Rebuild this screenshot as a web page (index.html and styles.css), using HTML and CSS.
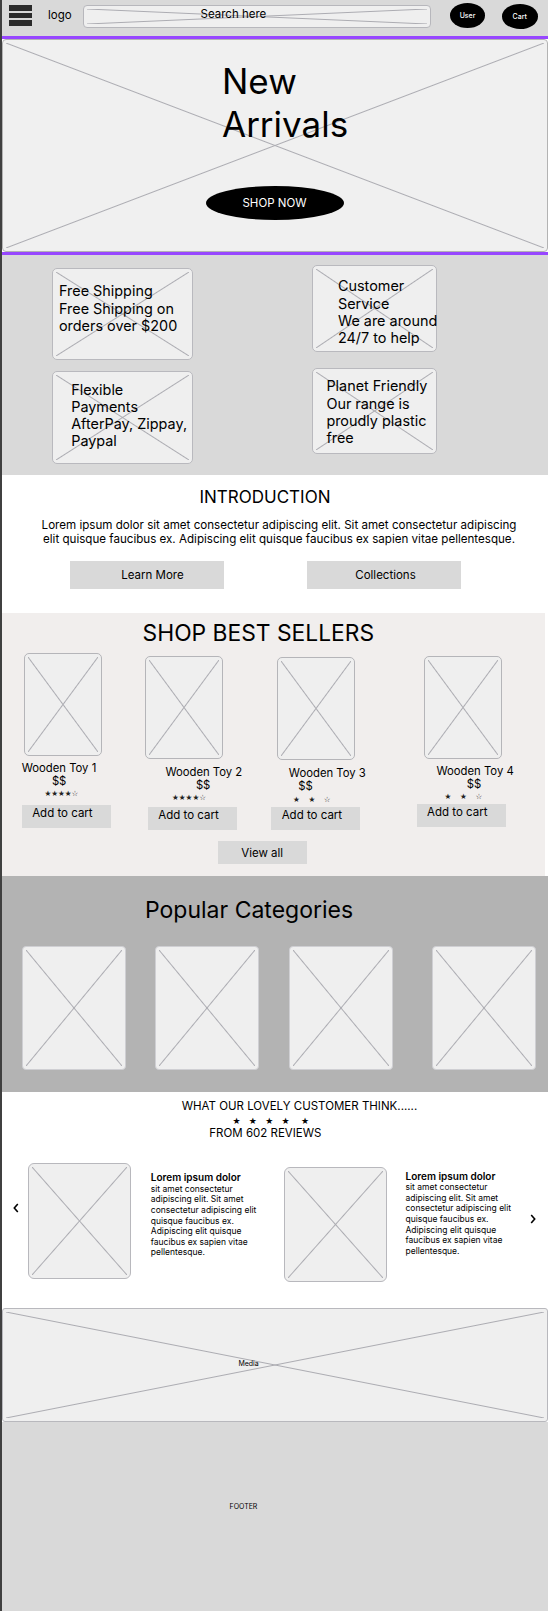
FILE: index.html
```html
<!DOCTYPE html>
<html lang="en">
<head>
<meta charset="utf-8">
<title>Wooden Toys – Home wireframe</title>
<link rel="stylesheet" href="styles.css">
</head>
<body>
<header class="topbar">
  <div class="menu"><span></span><span></span><span></span></div>
  <div class="logo">logo</div>
  <div class="search x">Search here</div>
  <a class="pill pill-user">User</a>
  <a class="pill pill-cart">Cart</a>
</header>

<section class="hero">
  <div class="hero-box x">
    <h1 class="hero-title">New<br>Arrivals</h1>
    <a class="shop-now">SHOP NOW</a>
  </div>
</section>

<section class="features">
  <div class="feat-col feat-col-left">
    <div class="feat feat-1 x">Free Shipping<br>Free Shipping on<br>orders over $200</div>
    <div class="feat feat-3 x">Flexible<br>Payments<br>AfterPay, Zippay,<br>Paypal</div>
  </div>
  <div class="feat-col feat-col-right">
    <div class="feat feat-2 x">Customer<br>Service<br>We are around<br>24/7 to help</div>
    <div class="feat feat-4 x">Planet Friendly<br>Our range is<br>proudly plastic<br>free</div>
  </div>
</section>

<section class="intro">
  <h2 class="intro-title">INTRODUCTION</h2>
  <p class="intro-text">Lorem ipsum dolor sit amet consectetur adipiscing elit. Sit amet consectetur adipiscing<br>elit quisque faucibus ex. Adipiscing elit quisque faucibus ex sapien vitae pellentesque.</p>
  <div class="intro-actions">
    <a class="btn btn-wide btn-learn">Learn More</a>
    <a class="btn btn-wide btn-coll">Collections</a>
  </div>
</section>

<section class="sellers">
  <h2 class="sellers-title">SHOP BEST SELLERS</h2>
  <div class="products">
    <div class="product p1">
      <div class="product-img x"></div>
      <div class="product-name">Wooden Toy 1</div>
      <div class="product-price">$$</div>
      <div class="product-stars stars-tight">★★★★☆</div>
      <a class="btn btn-cart">Add to cart</a>
    </div>
    <div class="product p2">
      <div class="product-img x"></div>
      <div class="product-name">Wooden Toy 2</div>
      <div class="product-price">$$</div>
      <div class="product-stars stars-tight">★★★★☆</div>
      <a class="btn btn-cart">Add to cart</a>
    </div>
    <div class="product p3">
      <div class="product-img x"></div>
      <div class="product-name">Wooden Toy 3</div>
      <div class="product-price">$$</div>
      <div class="product-stars stars-wide"><span>★</span><span>★</span><span>☆</span></div>
      <a class="btn btn-cart">Add to cart</a>
    </div>
    <div class="product p4">
      <div class="product-img x"></div>
      <div class="product-name">Wooden Toy 4</div>
      <div class="product-price">$$</div>
      <div class="product-stars stars-wide"><span>★</span><span>★</span><span>☆</span></div>
      <a class="btn btn-cart">Add to cart</a>
    </div>
  </div>
  <a class="btn btn-view">View all</a>
</section>

<section class="cats">
  <h2 class="cats-title">Popular Categories</h2>
  <div class="cat-row">
    <div class="cat cat-1 x"></div>
    <div class="cat cat-2 x"></div>
    <div class="cat cat-3 x"></div>
    <div class="cat cat-4 x"></div>
  </div>
</section>

<section class="reviews">
  <p class="rev-head">WHAT OUR LOVELY CUSTOMER THINK......</p>
  <div class="rev-stars"><span>★</span><span>★</span><span>★</span><span class="gap">★</span><span>★</span></div>
  <p class="rev-count">FROM 602 REVIEWS</p>
  <div class="carousel">
    <svg class="chev chev-left" width="6" height="10" viewBox="0 0 6 10"><path d="M4.8 1 L1.3 5 L4.8 9" fill="none" stroke="#000" stroke-width="1.6"/></svg>
    <div class="rev-img rev-img-1 x"></div>
    <p class="rev-text rev-text-1"><strong>Lorem ipsum dolor</strong><br>sit amet consectetur<br>adipiscing elit. Sit amet<br>consectetur adipiscing elit<br>quisque faucibus ex.<br>Adipiscing elit quisque<br>faucibus ex sapien vitae<br>pellentesque.</p>
    <div class="rev-img rev-img-2 x"></div>
    <p class="rev-text rev-text-2"><strong>Lorem ipsum dolor</strong><br>sit amet consectetur<br>adipiscing elit. Sit amet<br>consectetur adipiscing elit<br>quisque faucibus ex.<br>Adipiscing elit quisque<br>faucibus ex sapien vitae<br>pellentesque.</p>
    <svg class="chev chev-right" width="6" height="10" viewBox="0 0 6 10"><path d="M1.2 1 L4.7 5 L1.2 9" fill="none" stroke="#000" stroke-width="1.6"/></svg>
  </div>
</section>

<section class="media x">Media</section>

<footer class="footer">FOOTER</footer>
</body>
</html>
```

FILE: styles.css
```css
* { box-sizing: border-box; }
html, body { margin: 0; padding: 0; }
body {
  width: 548px;
  min-height: 1611px;
  border-left: 2px solid #404040;
  background: #ffffff;
  font-family: Inter, "Noto Sans", "Liberation Sans", sans-serif;
  color: #000;
}
h1, h2, p { margin: 0; font-weight: 400; }
a { color: inherit; text-decoration: none; }

/* wireframe placeholder with an X */
.x {
  background-color: #efefef;
  background-image:
    linear-gradient(to top right, transparent calc(50% - 1px), #acacb2 50%, transparent calc(50% + 1px)),
    linear-gradient(to bottom right, transparent calc(50% - 1px), #acacb2 50%, transparent calc(50% + 1px));
  background-repeat: no-repeat;
  background-position: center;
  background-size: calc(100% - 6px) calc(100% - 6px);
}

/* ---------- header ---------- */
.topbar {
  display: flex;
  align-items: flex-start;
  height: 36px;
  background: #d9d9d9;
}
.menu {
  display: flex;
  flex-direction: column;
  gap: 2px;
  width: 23px;
  margin: 5px 0 0 7px;
}
.menu span { display: block; height: 5.7px; background: #2b2b2b; }
.logo {
  margin: 8.3px 0 0 16px;
  font-size: 11.5px;
  line-height: 14px;
}
.search {
  width: 348px;
  height: 23px;
  margin: 5px 0 0 11.4px;
  padding: 1.2px 0 0 116.5px;
  border: 1px solid #b7b7bc;
  border-radius: 4px;
  font-size: 11.5px;
  line-height: 14px;
  white-space: nowrap;
}
.pill {
  display: flex;
  align-items: center;
  justify-content: center;
  background: #000;
  color: #fff;
  border-radius: 50%;
  font-size: 7px;
  font-weight: 500;
}
.pill-user { width: 35px; height: 24.4px; margin: 3.3px 0 0 19px; }
.pill-cart { width: 36px; height: 24.7px; margin: 4.3px 0 0 16.7px; }

/* ---------- hero ---------- */
.hero {
  margin-left: -2px;
  border: 3px solid #9747ff;
  border-left-width: 2px;
  border-right: 0;
}
.hero-box {
  height: 213px;
  padding-top: 20.2px;
  border: 1px solid #b3b3b3;
  border-radius: 4px;
  background-color: #f0f0f0;
}
.hero-title {
  margin-left: 219px;
  font-size: 35px;
  line-height: 43px;
}
.shop-now {
  display: flex;
  align-items: center;
  justify-content: center;
  width: 138px;
  height: 34px;
  margin: 39.8px 0 0 202.5px;
  background: #000;
  color: #fff;
  border-radius: 50%;
  font-size: 11.5px;
}

/* ---------- features ---------- */
.features {
  display: flex;
  height: 220px;
  padding-left: 50.4px;
  background: #d9d9d9;
}
.feat-col { display: flex; flex-direction: column; }
.feat-col-left { width: 141px; padding-top: 12.7px; gap: 10.4px; }
.feat-col-right { width: 125px; margin-left: 118.7px; padding-top: 9.7px; gap: 15.7px; }
.feat {
  border: 1.5px solid #b9b9be;
  border-radius: 5px;
  font-size: 14.4px;
  line-height: 17.2px;
  white-space: nowrap;
}
.feat-1 { height: 92.6px; padding: 13.8px 0 0 5.6px; }
.feat-2 { height: 87.3px; padding: 11.8px 0 0 24.9px; }
.feat-3 { height: 93px; padding: 9.1px 0 0 17.8px; }
.feat-4 { height: 86.6px; padding: 8.8px 0 0 13.3px; }

/* ---------- intro ---------- */
.intro {
  height: 138.3px;
  padding-top: 11.9px;
  background: #fff;
}
.intro-title {
  padding-right: 20px;
  font-size: 17px;
  line-height: 20px;
  text-align: center;
}
.intro-text {
  margin-top: 11.5px;
  padding-left: 8px;
  font-size: 11.6px;
  line-height: 14px;
  text-align: center;
  white-space: nowrap;
}
.intro-actions {
  display: flex;
  gap: 82.5px;
  margin-top: 14.5px;
  padding-left: 68px;
}
.btn {
  display: flex;
  align-items: center;
  justify-content: center;
  background: #d9d9d9;
  font-size: 11.5px;
  white-space: nowrap;
}
.btn-wide { width: 154px; height: 28px; }
.btn-learn { padding-left: 11px; }
.btn-coll { padding-left: 4px; }

/* ---------- best sellers ---------- */
.sellers {
  height: 263.2px;
  margin-right: 3px;
  padding-top: 5.9px;
  background: #f1eeed;
}
.sellers-title {
  padding-right: 30.4px;
  font-size: 22.8px;
  line-height: 28px;
  text-align: center;
}
.products {
  display: grid;
  grid-template-columns: 123.7px 125.8px 145.4px 1fr;
  align-items: start;
  padding-left: 19.7px;
}
.product { display: flex; flex-direction: column; align-items: flex-start; }
.p1 { --ix: 2.3px; --it: 5.8px; --nx: 0px;    --nt: 5.8px; --px: 30.2px; --sx: 22.7px; --st: 0px;   --bx: 0px;   --bt: 4.9px; }
.p2 { --ix: 0px;   --it: 9px;   --nx: 20px;   --nt: 6.9px; --px: 50.5px; --sx: 26.6px; --st: 0px;   --bx: 2.4px; --bt: 2.5px; }
.p3 { --ix: 5.6px; --it: 9.4px; --nx: 17.7px; --nt: 7.5px; --px: 27.1px; --sx: 21.8px; --st: 0.8px; --bx: 0px;   --bt: 1px; }
.p4 { --ix: 7.4px; --it: 8.4px; --nx: 19.9px; --nt: 6.5px; --px: 50.2px; --sx: 28px;   --st: 0px;   --bx: 0px;   --bt: 0.5px; }
.product-img {
  width: 78px;
  height: 103px;
  margin: var(--it) 0 0 var(--ix);
  border: 1.5px solid #b5b5b9;
  border-radius: 5px;
}
.product-name {
  margin: var(--nt) 0 0 var(--nx);
  font-size: 11.3px;
  line-height: 13px;
  white-space: nowrap;
}
.product-price {
  margin-left: var(--px);
  font-size: 11.3px;
  line-height: 13px;
}
.product-stars {
  margin: var(--st) 0 0 var(--sx);
  font-family: "DejaVu Sans", sans-serif;
  color: #222;
  line-height: 12px;
  white-space: nowrap;
}
.stars-tight { font-size: 7.6px; }
.stars-wide { font-size: 7.6px; }
.stars-wide span { margin-right: 8.6px; }
.btn-cart {
  justify-content: flex-start;
  align-items: flex-start;
  width: 89px;
  height: 23px;
  margin: var(--bt) 0 0 var(--bx);
  padding: 1.6px 0 0 10.5px;
  line-height: 14px;
}
.btn-view { width: 89px; height: 23.3px; margin: 11px 0 0 215.7px; }

/* ---------- categories ---------- */
.cats {
  height: 215.2px;
  padding-top: 20.5px;
  background: #b3b3b3;
}
.cats-title {
  padding-left: 143px;
  font-size: 23px;
  line-height: 27px;
}
.cat-row { display: flex; margin-top: 22.3px; padding-left: 19.7px; }
.cat {
  width: 104px;
  height: 124px;
  border: 1px solid #cfcfd3;
  border-radius: 4px;
}
.cat-2 { margin-left: 29.3px; }
.cat-3 { margin-left: 30px; }
.cat-4 { margin-left: 39.3px; }

/* ---------- reviews ---------- */
.reviews {
  height: 216.6px;
  padding-top: 8.5px;
  background: #fff;
}
.rev-head {
  margin-left: 179.7px;
  font-size: 11.5px;
  line-height: 13px;
  white-space: nowrap;
}
.rev-stars {
  margin: 3px 0 0 230.6px;
  font-family: "DejaVu Sans", sans-serif;
  font-size: 9px;
  line-height: 11px;
  white-space: nowrap;
}
.rev-stars span { margin-right: 8.2px; }
.rev-stars .gap { margin-right: 11.5px; }
.rev-count {
  margin-left: 207.3px;
  font-size: 11.5px;
  line-height: 12px;
  white-space: nowrap;
}
.carousel {
  display: flex;
  align-items: flex-start;
  padding-left: 11px;
}
.chev { flex: none; display: block; }
.chev-left { margin-top: 64.1px; }
.chev-right { margin: 75.1px 0 0 7px; }
.rev-img {
  flex: none;
  width: 103px;
  border: 1.5px solid #b8b8bd;
  border-radius: 6px;
}
.rev-img-1 { height: 116px; margin: 23.5px 0 0 9.3px; }
.rev-img-2 { height: 115.3px; margin: 27.5px 0 0 13.7px; }
.rev-text {
  flex: none;
  font-size: 8.5px;
  line-height: 10.6px;
  white-space: nowrap;
}
.rev-text strong {
  display: inline-block;
  font-size: 10px;
  font-weight: 600;
  line-height: 12px;
}
.rev-text-1 { width: 120px; margin: 32.1px 0 0 19.5px; }
.rev-text-2 { width: 118px; margin: 30.5px 0 0 18px; }

/* ---------- media ---------- */
.media {
  display: flex;
  align-items: center;
  height: 113.4px;
  padding: 0 0 3.4px 235.4px;
  border: 1px solid #b8b8bd;
  border-radius: 3px;
  font-size: 7px;
}

/* ---------- footer ---------- */
.footer {
  height: 189.3px;
  padding: 80.6px 0 0 227.5px;
  background: #d9d9d9;
  font-size: 7px;
  line-height: 10px;
}
```
